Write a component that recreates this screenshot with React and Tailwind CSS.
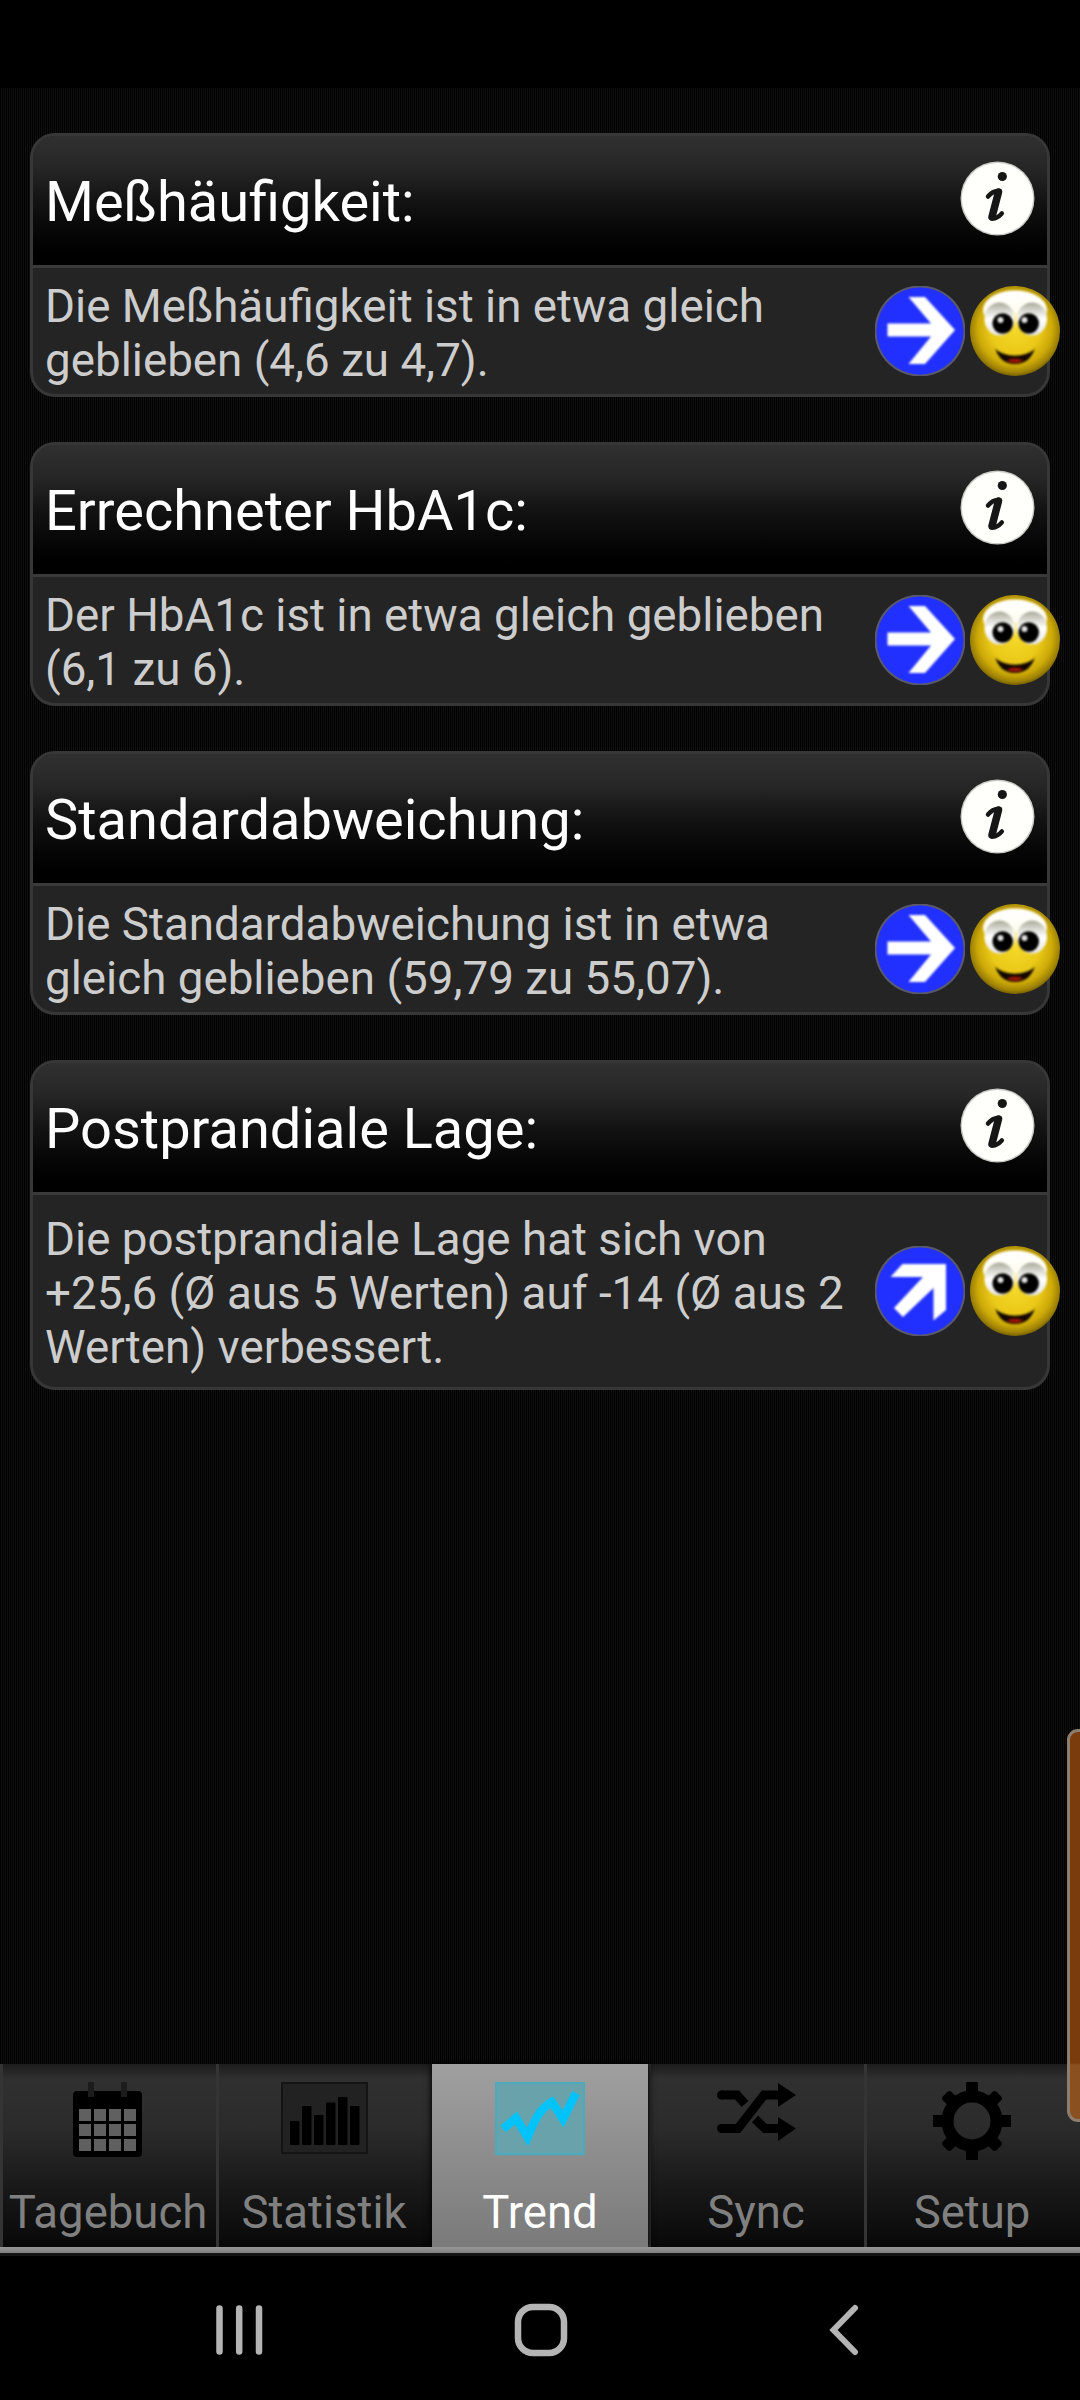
import React from "react";

const cards = [
  { title: "Meßhäufigkeit:", lines: ["Die Meßhäufigkeit ist in etwa gleich", "geblieben (4,6 zu 4,7)."], dir: "right" },
  { title: "Errechneter HbA1c:", lines: ["Der HbA1c ist in etwa gleich geblieben", "(6,1 zu 6)."], dir: "right" },
  { title: "Standardabweichung:", lines: ["Die Standardabweichung ist in etwa", "gleich geblieben (59,79 zu 55,07)."], dir: "right" },
  { title: "Postprandiale Lage:", lines: ["Die postprandiale Lage hat sich von", "+25,6 (Ø aus 5 Werten) auf -14 (Ø aus 2", "Werten) verbessert."], dir: "up", tall: true },
];

function InfoIcon() {
  return (
    <svg className="h-[75px] w-[75px] shrink-0" viewBox="0 0 75 75">
      <circle cx="37.500" cy="37.500" r="37" fill="#c9c9c6" />
      <circle cx="37.500" cy="37.500" r="35.600" fill="#fffffb" />
      <circle cx="42.300" cy="15.500" r="4.600" fill="#161616" />
      <path d="M28 35.500C31 32 34.500 29.500 38.500 30" fill="none" stroke="#161616" strokeWidth="4.500" strokeLinecap="round" />
      <path d="M38.500 31L32 56" fill="none" stroke="#161616" strokeWidth="7.500" strokeLinecap="round" />
      <path d="M32 57.500C35 58 39 55.500 41.800 52.500" fill="none" stroke="#161616" strokeWidth="4.500" strokeLinecap="round" />
    </svg>
  );
}

function ArrowIcon({ dir }) {
  return (
    <svg className="h-[90px] w-[90px] shrink-0" viewBox="0 0 90 90">
      <circle cx="45" cy="45" r="45.500" fill="#59596b" />
      <circle cx="45" cy="45" r="43.500" fill="#2230ff" />
      <g className="blur-[0.8px]">
        {dir === "right" ? (
          <path d="M33.500 11H50L80 44L50 78H33.500L56 50.500H12.500V37.500H56Z" fill="#fff" />
        ) : (
          <path d="M27.500 18H71V64L58.500 74.500V42L28 71L19 62L48 31H15.500Z" fill="#fff" />
        )}
      </g>
    </svg>
  );
}

function Smiley() {
  return (
    <svg className="h-[90px] w-[90px] shrink-0" viewBox="0 0 90 90">
      <defs>
        <radialGradient id="face" cx="0.5" cy="0.47" r="0.55">
          <stop offset="0" stopColor="#f6d92a" />
          <stop offset="0.5" stopColor="#eac918" />
          <stop offset="0.75" stopColor="#cdaa08" />
          <stop offset="0.9" stopColor="#9c8004" />
          <stop offset="1" stopColor="#5c4b00" />
        </radialGradient>
        <linearGradient id="shine" x1="0" y1="0" x2="0" y2="1">
          <stop offset="0" stopColor="#fff" />
          <stop offset="0.55" stopColor="#fffdf0" />
          <stop offset="1" stopColor="#f9ea80" stopOpacity="0" />
        </linearGradient>
        <linearGradient id="eye" x1="0" y1="0" x2="0" y2="1">
          <stop offset="0" stopColor="#a8a898" />
          <stop offset="0.25" stopColor="#d9d9d2" />
          <stop offset="0.5" stopColor="#fff" />
          <stop offset="1" stopColor="#e6e6e6" />
        </linearGradient>
      </defs>
      <circle cx="45" cy="45" r="45" fill="url(#face)" />
      <g className="blur-[1px]">
        <ellipse cx="45" cy="24" rx="32" ry="19.500" fill="url(#shine)" />
        <ellipse cx="29.500" cy="33" rx="15" ry="16.500" fill="url(#eye)" />
        <ellipse cx="62" cy="33" rx="15" ry="16.500" fill="url(#eye)" />
        <circle cx="32.700" cy="37.500" r="10.300" fill="#000" />
        <circle cx="58.700" cy="37.500" r="10.300" fill="#000" />
        <circle cx="30.500" cy="34" r="3" fill="#e4e4e4" />
        <circle cx="54.500" cy="34" r="3" fill="#e4e4e4" />
        <path d="M25 62.500C33 72 57 72 65 62.500C61 73 55 78 45 78C35 78 29 73 25 62.500Z" fill="#120700" />
        <path d="M37 74.500C40 72 50 72 53 74.500C49 77.500 41 77.500 37 74.500Z" fill="#a01408" />
      </g>
    </svg>
  );
}

function Card({ title, lines, dir, tall }) {
  return (
    <section className={`flex w-[1020px] shrink-0 flex-col rounded-[25px] border-[3px] border-[#373737] bg-[#242424] ${tall ? "h-[330px]" : "h-[264px]"}`}>
      <header className="flex h-[129px] shrink-0 items-center justify-between rounded-t-[22px] bg-[linear-gradient(#303030,#262626_25%,#131313_50%,#060606_75%,#000_92%)] px-[12px]">
        <h2 className="pt-[2px] text-[56px] leading-[66px] whitespace-nowrap text-white">{title}</h2>
        <div className="pb-[5px]"><InfoIcon /></div>
      </header>
      <div className="h-[3px] shrink-0 bg-[#3a3a3a]" />
      <div className="-mr-[13px] flex grow items-center justify-between pl-[12px]">
        <p className="pt-[5px] text-[45.750px] leading-[54px] whitespace-nowrap text-[#cdcdcd]">
          {lines.map((l) => <span key={l} className="block">{l}</span>)}
        </p>
        <div className="flex gap-[5px]">
          <ArrowIcon dir={dir} />
          <Smiley />
        </div>
      </div>
    </section>
  );
}

function CalendarIcon() {
  return (
    <svg className="h-[76px] w-[70px]" viewBox="0 0 70 76">
      <rect x="0" y="9" width="69" height="66" rx="4" fill="#000" />
      <rect x="15" y="0" width="6" height="15" fill="#1c1c1c" />
      <rect x="48" y="0" width="6" height="15" fill="#1c1c1c" />
      {[0, 1, 2].map((r) => [0, 1, 2, 3].map((c) => (
        <rect key={`${r}-${c}`} x={6 + c * 15} y={27 + r * 15} width="12" height="12" fill="#606060" />
      )))}
    </svg>
  );
}

function BarsIcon() {
  const bars = [[9, 39], [21, 24], [33, 33], [45, 20.5], [57, 15], [69, 24]];
  return (
    <svg className="h-[76px] w-[87px]" viewBox="0 0 87 76">
      <rect x="1" y="1" width="85" height="70" fill="#222" stroke="#141414" strokeWidth="2" />
      {bars.map(([x, y]) => <rect key={x} x={x} y={y} width="9.500" height={63 - y} rx="1" fill="#000" />)}
    </svg>
  );
}

function TrendIcon() {
  return (
    <svg className="h-[76px] w-[90px]" viewBox="0 0 90 76">
      <rect x="1" y="1" width="88" height="71" fill="#6aa2ac" stroke="#4eaabb" strokeWidth="2.500" />
      <path className="blur-[0.7px]" d="M8 47L21 36L32.500 55C39 40 44 27 57 20L68 37L81 11" fill="none" stroke="#00c3fa" strokeWidth="8.500" />
    </svg>
  );
}

function ShuffleIcon() {
  return (
    <svg className="h-[76px] w-[79px]" viewBox="0 0 79 76">
      <path d="M4 13H20L28 22M4 46.500H21L47 13H64M38 37L48 46.500H64" fill="none" stroke="#000" strokeWidth="9" />
      <circle cx="4.500" cy="13" r="4.500" />
      <circle cx="4.500" cy="46.500" r="4.500" />
      <path d="M61 1L79 13L61 25ZM61 35L79 46.500L61 59Z" fill="#000" />
    </svg>
  );
}

function GearIcon() {
  return (
    <svg className="h-[78px] w-[78px]" viewBox="0 0 78 78">
      <circle cx="39" cy="39" r="24.500" fill="none" stroke="#000" strokeWidth="12" />
      {[0, 45, 90, 135, 180, 225, 270, 315].map((a) => (
        <rect key={a} x="33" y={a % 90 ? 1 : 0} width="12" height="15" rx={a % 90 ? 3 : 0} transform={`rotate(${a} 39 39)`} fill="#000" />
      ))}
    </svg>
  );
}

const tabs = [
  ["Tagebuch", CalendarIcon],
  ["Statistik", BarsIcon],
  ["Trend", TrendIcon],
  ["Sync", ShuffleIcon],
  ["Setup", GearIcon],
];

export default function App() {
  return (
    <div className="relative flex h-[2400px] w-[1080px] flex-col overflow-hidden bg-black font-[Roboto,sans-serif]">
      <div className="h-[88px] shrink-0 bg-black" />
      <main className="flex h-[1976px] shrink-0 flex-col items-start gap-[45px] bg-[repeating-linear-gradient(90deg,#000_0px,#000_1px,#101010_1px,#101010_2px)] pt-[45px] pl-[30px]">
        {cards.map((c) => <Card key={c.title} {...c} />)}
      </main>
      <nav className="grid h-[183px] shrink-0 grid-cols-5 bg-[#111]">
        {tabs.map(([label, Icon]) => {
          const on = label === "Trend";
          return (
            <div
              key={label}
              className={`flex flex-col items-center pt-[18px] ${on ? "z-10 bg-gradient-to-b from-[#a0a0a0] to-[#7a7a7a] text-white shadow-[0_0_6px_1px_#000]" : "bg-[linear-gradient(#1c1c1c,#303030_8%,#2b2b2b_35%,#1a1a1a_65%,#080808)] text-[#808080] shadow-[inset_3px_0_0_#343434]"}`}
            >
              <div className="flex h-[104px] items-start"><Icon /></div>
              <span className="text-[45.500px] leading-[54px]">{label}</span>
            </div>
          );
        })}
      </nav>
      <div className="z-20 h-[6px] shrink-0 bg-gradient-to-b from-[#989898] to-[#808080]" />
      <div className="h-[3px] shrink-0 bg-[#141414]" />
      <footer className="flex grow items-center justify-between pt-[4px] pr-[221px] pl-[215px]">
        <svg className="h-[54px] w-[48px]" viewBox="0 0 48 54"><path d="M4.500 5.500V48.500M24.200 5.500V48.500M44 5.500V48.500" stroke="#b4b4b4" strokeWidth="6.500" strokeLinecap="round" /></svg>
        <svg className="mr-[11px] h-[54px] w-[54px]" viewBox="0 0 54 54"><rect x="4" y="4" width="46" height="46" rx="15" fill="none" stroke="#b4b4b4" strokeWidth="6.500" /></svg>
        <svg className="h-[54px] w-[30px]" viewBox="0 0 30 54"><path d="M26 5L4.500 27L26 49" fill="none" stroke="#b4b4b4" strokeWidth="6" strokeLinecap="round" /></svg>
      </footer>
      <div className="absolute top-[1729px] -right-[12px] z-30 h-[393px] w-[25px] rounded-[11px] border-[3px] border-[#8d7d6c] bg-[linear-gradient(#7a3c0c_85.500%,#8b5020_86%)]" />
    </div>
  );
}
